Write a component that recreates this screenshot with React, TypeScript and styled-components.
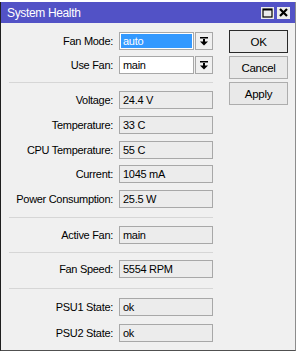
import React from 'react';
import styled, { createGlobalStyle } from 'styled-components';

const GlobalStyle = createGlobalStyle`
  html, body {
    margin: 0;
    padding: 0;
    background: #ffffff;
  }
  body {
    font-family: "Liberation Sans", Arial, sans-serif;
    font-size: 11px;
    letter-spacing: -0.3px;
    color: #000;
  }
`;

const Window = styled.div`
  margin-top: 2px;
  width: 296px;
  height: 349px;
  box-sizing: border-box;
  border-left: 1px solid #1e1e1e;
  border-right: 1px solid #8c8c8c;
  border-bottom: 1px solid #505050;
  background: #f0f0f0;
  display: flex;
  flex-flow: column;
`;

const TitleBar = styled.div`
  height: 21px;
  background: #5252c6;
  color: #ffffff;
  display: flex;
  align-items: center;
  padding: 0 5px 0 6px;
  font-size: 12px;
  letter-spacing: -0.35px;
`;

const Title = styled.div`
  flex: 1;
`;

const WinButtons = styled.div`
  display: flex;
  gap: 3px;
`;

const WinButton = styled.div`
  width: 13px;
  height: 12px;
  background: #ececec;
  display: flex;
  align-items: center;
  justify-content: center;
`;

const Body = styled.div`
  display: flex;
  flex-flow: row;
  padding: 7px 0 0 8px;
  gap: 16px;
`;

const Form = styled.div`
  width: 204px;
  padding-top: 2px;
  display: flex;
  flex-flow: column;
`;

const Section = styled.div<{ gap: number }>`
  display: flex;
  flex-flow: column;
  gap: ${(p) => p.gap}px;
`;

const Separator = styled.div<{ above?: number; below?: number }>`
  height: 1px;
  background: #d6d6d6;
  margin: ${(p) => p.above ?? 8}px 0 ${(p) => p.below ?? 8}px 0;
`;

const Row = styled.div`
  display: grid;
  grid-template-columns: 104px 1fr;
  column-gap: 6px;
  height: 18px;
  align-items: center;
`;

const Label = styled.div`
  text-align: right;
  white-space: nowrap;
`;

const Field = styled.div`
  height: 18px;
  box-sizing: border-box;
  border: 1px solid #a8a8a8;
  background: #ececec;
  padding: 0 3px;
  display: flex;
  align-items: center;
  white-space: nowrap;
`;

const Combo = styled.div`
  display: flex;
  gap: 1px;
  height: 18px;
`;

const ComboInput = styled.div`
  flex: 1;
  box-sizing: border-box;
  border: 1px solid #a8a8a8;
  background: #ffffff;
  padding: 1px;
  display: flex;
`;

const ComboText = styled.div<{ selected?: boolean }>`
  flex: 1;
  display: flex;
  align-items: center;
  padding: 0 2px;
  background: ${(p) => (p.selected ? '#3399ff' : 'transparent')};
  color: ${(p) => (p.selected ? '#ffffff' : '#000000')};
`;

const ArrowButton = styled.div`
  width: 18px;
  box-sizing: border-box;
  border: 1px solid #a8a8a8;
  background: #f0f0f0;
  display: flex;
  align-items: center;
  justify-content: center;
`;

const ButtonColumn = styled.div`
  display: flex;
  flex-flow: column;
  gap: 3px;
`;

const Button = styled.div<{ primary?: boolean }>`
  width: 59px;
  height: 23px;
  box-sizing: border-box;
  border: 1px solid ${(p) => (p.primary ? '#2a2a2a' : '#adadad')};
  background: #e9e9e9;
  display: flex;
  align-items: center;
  justify-content: center;
  font-size: 11.5px;
`;

const DropArrow = () => (
  <svg width="8" height="9" viewBox="0 0 8 9">
    <rect x="0" y="0" width="8" height="1.5" fill="#000" />
    <rect x="3" y="2" width="2" height="3" fill="#000" />
    <polygon points="0,4.5 8,4.5 4,8.5" fill="#000" />
  </svg>
);

const MaxIcon = () => (
  <svg width="11" height="10" viewBox="0 0 11 10">
    <rect x="1" y="1" width="9" height="8" fill="none" stroke="#000" strokeWidth="1.2" />
    <rect x="1" y="1" width="9" height="1.5" fill="#000" />
  </svg>
);

const CloseIcon = () => (
  <svg width="9" height="9" viewBox="0 0 9 9">
    <path d="M1 1 L8 8 M8 1 L1 8" stroke="#000" strokeWidth="2.2" />
  </svg>
);

const ValueRow = (props: { label: string; value: string }) => (
  <Row>
    <Label>{props.label}</Label>
    <Field>{props.value}</Field>
  </Row>
);

const ComboRow = (props: { label: string; value: string; selected?: boolean }) => (
  <Row>
    <Label>{props.label}</Label>
    <Combo>
      <ComboInput>
        <ComboText selected={props.selected}>{props.value}</ComboText>
      </ComboInput>
      <ArrowButton>
        <DropArrow />
      </ArrowButton>
    </Combo>
  </Row>
);

const App = () => {
  return (
    <>
      <GlobalStyle />
      <Window>
        <TitleBar>
          <Title>System Health</Title>
          <WinButtons>
            <WinButton><MaxIcon /></WinButton>
            <WinButton><CloseIcon /></WinButton>
          </WinButtons>
        </TitleBar>
        <Body>
          <Form>
            <Section gap={6}>
              <ComboRow label="Fan Mode:" value="auto" selected />
              <ComboRow label="Use Fan:" value="main" />
            </Section>
            <Separator />
            <Section gap={6.75}>
              <ValueRow label="Voltage:" value="24.4 V" />
              <ValueRow label="Temperature:" value="33 C" />
              <ValueRow label="CPU Temperature:" value="55 C" />
              <ValueRow label="Current:" value="1045 mA" />
              <ValueRow label="Power Consumption:" value="25.5 W" />
            </Section>
            <Separator above={9} below={8} />
            <Section gap={6.75}>
              <ValueRow label="Active Fan:" value="main" />
            </Section>
            <Separator above={8} below={7} />
            <Section gap={6.75}>
              <ValueRow label="Fan Speed:" value="5554 RPM" />
            </Section>
            <Separator above={10} below={9} />
            <Section gap={7.5}>
              <ValueRow label="PSU1 State:" value="ok" />
              <ValueRow label="PSU2 State:" value="ok" />
            </Section>
          </Form>
          <ButtonColumn>
            <Button primary>OK</Button>
            <Button>Cancel</Button>
            <Button>Apply</Button>
          </ButtonColumn>
        </Body>
      </Window>
    </>
  );
};

export default App;
